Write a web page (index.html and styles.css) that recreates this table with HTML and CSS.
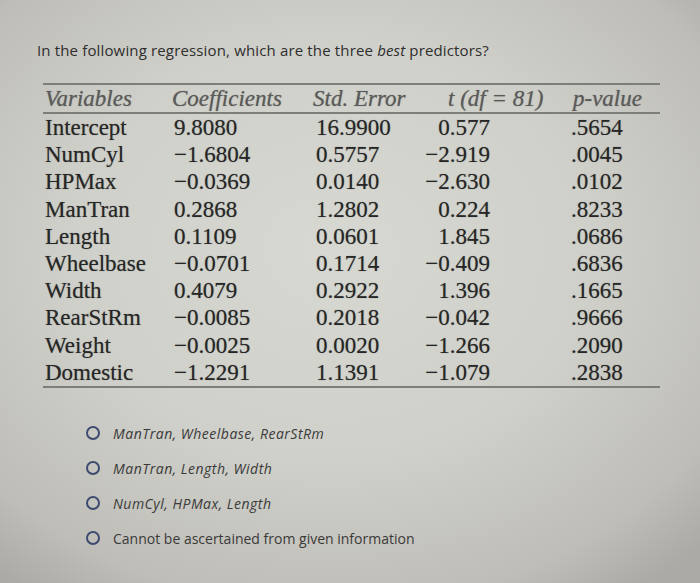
FILE: index.html
```html
<!DOCTYPE html>
<html>
<head>
<meta charset="utf-8">
<link rel="stylesheet" href="styles.css">
</head>
<body>
<div class="page">
  <p class="question">In the following regression, which are the three <em>best</em> predictors?</p>
  <table class="reg">
    <colgroup>
      <col class="c1"><col class="c2"><col class="c3"><col class="c4"><col class="c5">
    </colgroup>
    <thead>
      <tr>
        <th class="name">Variables</th>
        <th class="coef">Coefficients</th>
        <th class="se">Std. Error</th>
        <th class="t">t (df = 81)</th>
        <th class="p">p-value</th>
      </tr>
    </thead>
    <tbody>
      <tr><td class="name">Intercept</td><td class="coef">9.8080</td><td class="se">16.9900</td><td class="t">0.577</td><td class="p">.5654</td></tr>
      <tr><td class="name">NumCyl</td><td class="coef">−1.6804</td><td class="se">0.5757</td><td class="t">−2.919</td><td class="p">.0045</td></tr>
      <tr><td class="name">HPMax</td><td class="coef">−0.0369</td><td class="se">0.0140</td><td class="t">−2.630</td><td class="p">.0102</td></tr>
      <tr><td class="name">ManTran</td><td class="coef">0.2868</td><td class="se">1.2802</td><td class="t">0.224</td><td class="p">.8233</td></tr>
      <tr><td class="name">Length</td><td class="coef">0.1109</td><td class="se">0.0601</td><td class="t">1.845</td><td class="p">.0686</td></tr>
      <tr><td class="name">Wheelbase</td><td class="coef">−0.0701</td><td class="se">0.1714</td><td class="t">−0.409</td><td class="p">.6836</td></tr>
      <tr><td class="name">Width</td><td class="coef">0.4079</td><td class="se">0.2922</td><td class="t">1.396</td><td class="p">.1665</td></tr>
      <tr><td class="name">RearStRm</td><td class="coef">−0.0085</td><td class="se">0.2018</td><td class="t">−0.042</td><td class="p">.9666</td></tr>
      <tr><td class="name">Weight</td><td class="coef">−0.0025</td><td class="se">0.0020</td><td class="t">−1.266</td><td class="p">.2090</td></tr>
      <tr><td class="name">Domestic</td><td class="coef">−1.2291</td><td class="se">1.1391</td><td class="t">−1.079</td><td class="p">.2838</td></tr>
    </tbody>
  </table>
  <ul class="options">
    <li class="opt"><span class="radio"></span><span class="label it">ManTran, Wheelbase, RearStRm</span></li>
    <li class="opt"><span class="radio"></span><span class="label it">ManTran, Length, Width</span></li>
    <li class="opt"><span class="radio"></span><span class="label it">NumCyl, HPMax, Length</span></li>
    <li class="opt"><span class="radio"></span><span class="label">Cannot be ascertained from given information</span></li>
  </ul>
</div>
</body>
</html>
```
FILE: styles.css
```css
html, body {
  margin: 0;
  padding: 0;
}
body {
  width: 700px;
  height: 583px;
  overflow: hidden;
  background: radial-gradient(ellipse 520px 420px at 330px 250px, #d7d8d2 0%, #d0d0ca 50%, #bebdb7 85%, #abaaa4 100%);
}
.page {
  padding: 37px 0 0 37px;
  height: 100%;
  box-sizing: border-box;
}
.question {
  margin: 0;
  font-family: "Open Sans", sans-serif;
  font-size: 15px;
  letter-spacing: 0.15px;
  line-height: 26px;
  color: #2e2e2e;
}
.question em {
  font-style: italic;
}
.reg {
  margin: 20px 0 0 6px;
  border-collapse: collapse;
  table-layout: fixed;
  width: 617px;
  font-family: "Liberation Serif", "Times New Roman", serif;
  font-size: 23px;
  color: #262626;
  text-shadow: 0 0 1px rgba(40, 40, 40, 0.45);
}
.c1 { width: 129px; }
.c2 { width: 141px; }
.c3 { width: 110px; }
.c4 { width: 137px; }
.c5 { width: 100px; }
.reg th, .reg td {
  padding: 0;
  height: 27.2px;
  line-height: 27px;
  white-space: nowrap;
  text-align: left;
  vertical-align: middle;
}
.reg thead tr {
  border-top: 2px solid #7d7d7a;
  border-bottom: 2px solid #7d7d7a;
}
.reg th {
  font-weight: normal;
  font-style: italic;
  color: #5a5a5a;
  height: 27px;
}
.reg tbody tr:last-child {
  border-bottom: 2px solid #7d7d7a;
}
.reg .name { padding-left: 2px; }
.reg th.coef { padding-left: 0; }
.reg td.coef { padding-left: 2px; }
.reg th.se { padding-left: 0; }
.reg td.se { padding-left: 3px; }
.reg th.t { padding-left: 25px; }
.reg td.t { text-align: right; padding-right: 70px; }
.reg th.p { padding-left: 13px; }
.reg td.p { padding-left: 11px; }
.options {
  list-style: none;
  margin: 28px 0 0 0;
  padding: 0 0 0 49px;
}
.opt {
  display: flex;
  align-items: center;
  height: 35px;
  gap: 13px;
}
.radio {
  width: 10px;
  height: 10px;
  border: 2px solid #3d4b70;
  border-radius: 50%;
  flex: none;
}
.label {
  font-family: "Open Sans", sans-serif;
  font-size: 14px;
  color: #3a3a3a;
}
.label.it {
  font-style: italic;
  letter-spacing: 0.5px;
}
```
